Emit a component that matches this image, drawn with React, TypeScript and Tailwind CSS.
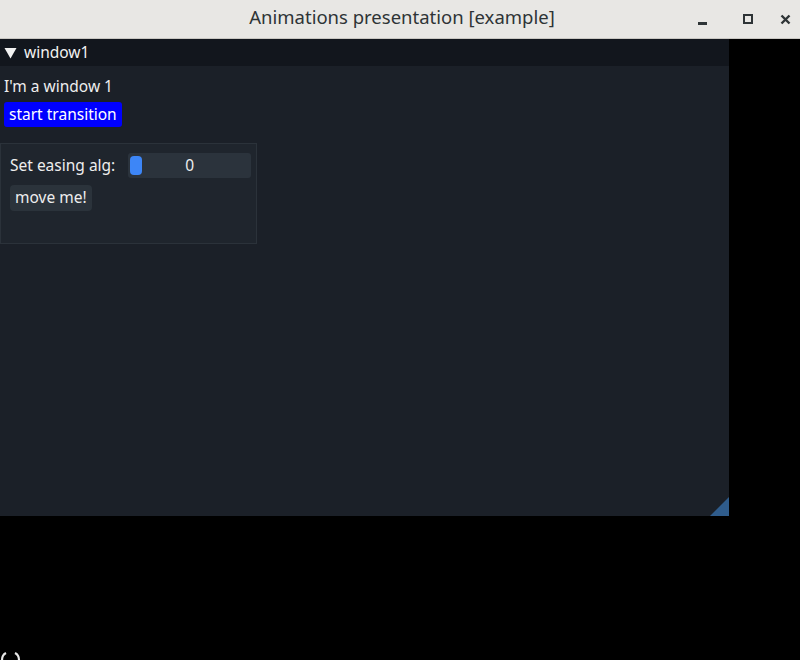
import React from "react";

export default function App() {
  const font = { fontFamily: '"Noto Sans", "Open Sans", sans-serif' };
  return (
    <div className="w-[800px] h-[660px] bg-black flex flex-col overflow-hidden relative" style={font}>
      {/* OS title bar */}
      <div className="h-[39px] shrink-0 bg-[#e8e7e4] border-b border-[#c9c7c2] flex items-center relative">
        <div className="flex-1 text-center text-[18.5px] text-[#2e3436] pl-[4px] pb-[4px]">Animations presentation [example]</div>
        <div className="absolute right-0 top-0 h-full flex items-center">
          <div className="w-[45px] flex justify-center">
            <div className="w-[9px] h-[3px] bg-[#2e3436] mt-[8px]"></div>
          </div>
          <div className="w-[45px] flex justify-center">
            <div className="w-[10px] h-[10px] border-[2px] border-[#2e3436]"></div>
          </div>
          <div className="w-[30px] flex justify-center">
            <svg width="11" height="11" viewBox="0 0 11 11">
              <path d="M1.5 1.5 L9.5 9.5 M9.5 1.5 L1.5 9.5" stroke="#2e3436" strokeWidth="2.4" />
            </svg>
          </div>
        </div>
      </div>

      {/* ImGui window */}
      <div className="w-[729px] h-[477px] shrink-0 bg-[#1b2028] flex flex-col relative">
        <div className="h-[27px] bg-[#12161d] flex items-center px-[4px] gap-[7px] text-[#f2f2f2] text-[15.5px]">
          <svg width="13" height="12" viewBox="0 0 13 12">
            <path d="M0.5 1 L12.5 1 L6.5 11.5 Z" fill="#f2f2f2" />
          </svg>
          <span className="leading-none">window1</span>
        </div>
        <div className="flex flex-col items-start px-[4px] pt-[10px]">
          <div className="text-[15.5px] text-[#eeeeee] leading-[20px]">I'm a window 1</div>
          <div className="mt-[6px] h-[25px] px-[5px] bg-[#0000ff] rounded-[3px] text-white text-[15.5px] flex items-center">start transition</div>
        </div>
        <div className="mt-[16px] w-[257px] h-[101px] bg-[#1f252d] border border-[#2b323a] flex flex-col pl-[9px] pr-[4px] pt-[9px] gap-[7px]">
          <div className="flex items-center gap-[13px]">
            <span className="text-[15.5px] text-[#eeeeee] leading-none whitespace-nowrap">Set easing alg:</span>
            <div className="w-[123px] shrink-0 h-[25px] bg-[#2b333c] rounded-[3px] relative flex items-center justify-center">
              <div className="absolute left-[2px] top-[3px] w-[12px] h-[19px] rounded-[4px] bg-[#3d86f7]"></div>
              <span className="text-[15.5px] text-[#eeeeee] leading-none">0</span>
            </div>
          </div>
          <div className="self-start h-[26px] px-[5px] bg-[#2b333b] rounded-[4px] text-[15.5px] text-[#eeeeee] flex items-center">move me!</div>
        </div>
        <svg className="absolute right-0 bottom-0" width="19" height="19" viewBox="0 0 19 19">
          <path d="M19 0 L19 19 L0 19 Z" fill="#2f5c8c" />
        </svg>
      </div>

      <svg className="absolute left-0 top-[651px]" width="30" height="9" viewBox="0 0 30 9">
        <path d="M6 2 Q2 4 2 9" stroke="#e6e6e6" strokeWidth="2.2" fill="none" />
        <path d="M15 2 Q19 4 19 9" stroke="#e6e6e6" strokeWidth="2.2" fill="none" />
      </svg>
    </div>
  );
}
